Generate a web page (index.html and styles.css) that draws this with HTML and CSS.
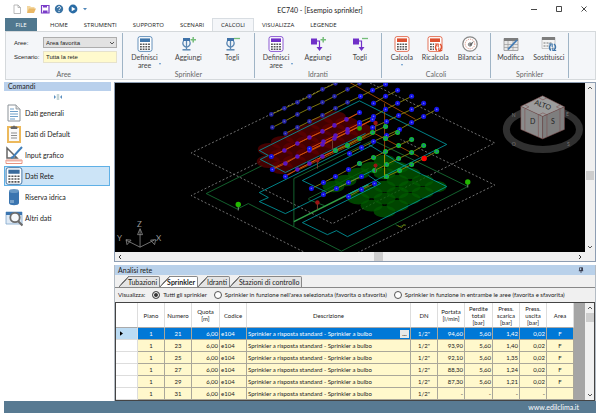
FILE: index.html
```
<!DOCTYPE html>
<html lang="it">

<head>
    <meta charset="utf-8">
    <title>EC740 - [Esempio sprinkler]</title>
    <link rel="stylesheet" href="styles.css">
</head>

<body>

    <!-- shared icons -->
    <svg class="defs" width="0" height="0">
        <symbol id="calc" viewBox="0 0 16 16">
            <rect x="1" y=".6" width="14" height="14.8" rx="2" fill="#fff" stroke="currentColor" stroke-width=".8" />
            <rect x="3" y="2.4" width="10" height="3.6" fill="currentColor" />
            <path d="M3 8.2h10M3 10.7h10M3 13.2h10" stroke="#555" stroke-width="1.4" stroke-dasharray="1.8 .9" />
        </symbol>
        <symbol id="sprink" viewBox="0 0 16 16">
            <path d="M3 2h7v3H3z" fill="#3f72a8" />
            <path d="M3.5 5C2 7.500 3 10 6.500 11.500 10 10 11 7.500 9.500 5M6.500 5v8" fill="none" stroke="#5b87b3" stroke-width="1.300" />
            <path d="M2.500 13.800h8" stroke="#5b87b3" stroke-width="1.500" />
        </symbol>
        <symbol id="hydrant" viewBox="0 0 16 16">
            <path d="M1 2.500h6v6H1z" fill="#7030c8" />
            <path d="M7 5h2.500v7" fill="none" stroke="#7030c8" stroke-width="1.200" />
            <path d="M6.500 11h6l-3 4z" fill="#7030c8" />
        </symbol>
        <symbol id="plus" viewBox="0 0 16 16">
            <path d="M10.500 3.800h5.500M13.200 1v5.500" stroke="#74bd78" stroke-width="1.500" />
        </symbol>
        <symbol id="minus" viewBox="0 0 16 16">
            <path d="M10 2.500h6" stroke="#74bd78" stroke-width="1.300" />
        </symbol>
        <symbol id="cycle" viewBox="0 0 16 16">
            <path d="M10 14.500c-2-1.500-2-4.500 0-6M13 8c2 1.500 2 4.500 0 6" fill="none" stroke="currentColor" stroke-width="1.500" />
            <path d="M7.800 8h3.400v3M15.200 14.500h-3.400v-3" fill="none" stroke="currentColor" stroke-width="1.100" />
        </symbol>
        <symbol id="chev" viewBox="0 0 6 6">
            <path d="M1 2l2 2 2-2" fill="none" stroke="#555" stroke-width="1" />
        </symbol>
    </svg>

    <div class="window">

        <header class="titlebar">
            <div class="quick">
                <button aria-label="Nuovo"><svg viewBox="0 0 10 10"><path d="M2 1h4l2.500 2.500V9.500H2z M6 1v2.500h2.500" fill="#fff" stroke="#aaa" stroke-width=".8" /></svg></button>
                <button aria-label="Apri"><svg viewBox="0 0 10 10"><path d="M1 9V2h3l1 1h3.500v2" fill="#f3d7a0" /><path d="M1 9l2-4.500h7L8 9z" fill="#eab866" /></svg></button>
                <button aria-label="Salva"><svg viewBox="0 0 10 10"><path d="M1.500 1.500h7.500v7.500H1.500z" fill="#fff" stroke="#7a3cc8" stroke-width="1.200" /><path d="M3 1h4v2.500H3zM3 6.500h4.500V9H3z" fill="#7a3cc8" /></svg></button>
                <button aria-label="Aiuto"><svg viewBox="0 0 10 10"><circle cx="5" cy="5" r="4.200" fill="#3b74a5" /><path d="M3.600 4c0-2 2.900-2 2.900-.2C6.500 5 5 5 5 6.200M5 7v1" fill="none" stroke="#fff" stroke-width="1" /></svg></button>
                <button aria-label="Avvia"><svg viewBox="0 0 10 10"><circle cx="5" cy="5" r="4.400" fill="#2a6ca5" /><path d="M3.700 2.800v4.400L7.500 5z" fill="#fff" /></svg></button>
                <button class="more" aria-label="Altro"><svg viewBox="0 0 10 10"><path d="M3 4h4L5 6.200z" fill="#4f86b8" /></svg></button>
            </div>
            <h1>EC740 - [Esempio sprinkler]</h1>
            <div class="controls">
                <button aria-label="Riduci"><svg viewBox="0 0 8 8"><path d="M1 4.500h6" stroke="#333" stroke-width=".9" /></svg></button>
                <button aria-label="Ingrandisci"><svg viewBox="0 0 8 8"><path d="M1.500 1.500h5v5h-5z" fill="none" stroke="#333" stroke-width=".9" /></svg></button>
                <button aria-label="Chiudi"><svg viewBox="0 0 8 8"><path d="M1.500 1.500l5 5M6.500 1.500l-5 5" stroke="#333" stroke-width=".9" /></svg></button>
            </div>
        </header>

        <nav class="menu">
            <button class="file">FILE</button>
            <button>HOME</button>
            <button>STRUMENTI</button>
            <button>SUPPORTO</button>
            <button>SCENARI</button>
            <button class="active">CALCOLI</button>
            <button>VISUALIZZA</button>
            <button>LEGENDE</button>
        </nav>

        <div class="ribbon">
            <section class="group">
                <div class="fields">
                    <label for="aree">Aree:</label>
                    <div class="selectBox">
                        <select id="aree"><option>Area favorita</option></select>
                        <svg viewBox="0 0 6 6"><use href="#chev" /></svg>
                    </div>
                    <label for="scenario">Scenario:</label>
                    <input id="scenario" type="text" value="Tutta la rete">
                </div>
                <h2>Aree</h2>
            </section>
            <section class="group">
                <div class="tools three">
                    <button><svg class="blue" viewBox="0 0 16 16"><use href="#calc" /></svg><span class="drop">Definisci<br>aree</span></button>
                    <button><svg viewBox="0 0 16 16"><use href="#sprink" /><use href="#plus" /></svg><span>Aggiungi</span></button>
                    <button><svg viewBox="0 0 16 16"><use href="#sprink" /><use href="#minus" /></svg><span>Togli</span></button>
                </div>
                <h2>Sprinkler</h2>
            </section>
            <section class="group">
                <div class="tools three">
                    <button><svg class="violet" viewBox="0 0 16 16"><use href="#calc" /></svg><span class="drop">Definisci<br>aree</span></button>
                    <button><svg viewBox="0 0 16 16"><use href="#hydrant" /><use href="#plus" /></svg><span>Aggiungi</span></button>
                    <button><svg viewBox="0 0 16 16"><use href="#hydrant" /><use href="#minus" /></svg><span>Togli</span></button>
                </div>
                <h2>Idranti</h2>
            </section>
            <section class="group">
                <div class="tools calcs">
                    <button><svg class="red" viewBox="0 0 16 16"><use href="#calc" /></svg><span>Calcola</span><i class="caret"></i></button>
                    <button><svg class="red" viewBox="0 0 16 16"><use href="#calc" /><path d="M7 7h7v8H7z" fill="#fff" /><use href="#cycle" /></svg><span>Ricalcola</span></button>
                    <button>
                        <svg viewBox="0 0 16 16">
                            <circle cx="8" cy="8" r="7.200" fill="#fff" stroke="#888" stroke-width="1.300" />
                            <circle cx="8" cy="8" r="4.800" fill="none" stroke="#d98a78" stroke-width="1" stroke-dasharray="1 1" />
                            <path d="M7 8.500l5-3.500-3 5z" fill="#666" /><circle cx="8" cy="8.500" r="1.600" fill="none" stroke="#666" />
                        </svg>
                        <span>Bilancia</span>
                    </button>
                </div>
                <h2>Calcoli</h2>
            </section>
            <section class="group">
                <div class="tools two">
                    <button>
                        <svg viewBox="0 0 16 16">
                            <path d="M1 2.500h14v12H1z" fill="#e8e8e8" stroke="#888" stroke-width=".7" /><path d="M1 2h14v3H1z" fill="#7d7d7d" />
                            <path d="M1 8.500h14M1 11.500h14M5 5v9.500M10 5v9.500" stroke="#999" stroke-width=".7" /><path d="M5 13.500L14 4" stroke="#3f7ab5" stroke-width="1.800" />
                        </svg>
                        <span>Modifica</span>
                    </button>
                    <button>
                        <svg class="blue" viewBox="0 0 16 16">
                            <path d="M1 1.500h13v11H1z" fill="#f4f4f4" stroke="#aaa" stroke-width=".6" /><path d="M1 1h13v3H1z" fill="#7d7d7d" />
                            <path d="M2.500 7h9M2.500 10h5" stroke="#777" stroke-width="1.200" stroke-dasharray="2 1" /><use href="#cycle" />
                        </svg>
                        <span>Sostituisci</span>
                    </button>
                </div>
                <h2>Sprinkler</h2>
            </section>
            <div></div>
        </div>

        <div class="workspace">

            <aside class="commands">
                <h2>Comandi</h2>
                <button class="collapse" aria-label="Comprimi"><svg viewBox="0 0 10 8"><path d="M1 2l2 2-2 2zM9 2L7 4l2 2z" fill="#5b8fc0" /><path d="M4.300 1v6M5.700 1v6" stroke="#8aa" stroke-width=".6" /></svg></button>
                <button class="item">
                    <svg viewBox="0 0 18 18"><path d="M3 1h8l4 4v12H3z" fill="#fff" stroke="#8b9298" /><path d="M11 1v4h4" fill="#ddd" stroke="#8b9298" stroke-width=".8" /><path d="M5 5h4M5 7.500h8M5 10h8M5 12.500h8M5 15h5" stroke="#6f9fca" stroke-width="1.100" /></svg>Dati generali
                </button>
                <button class="item">
                    <svg viewBox="0 0 18 18"><path d="M3 2h12v15H3z" fill="#fafafa" stroke="#ecb95c" stroke-width="2" /><path d="M6 3.500V2h2a1 1 0 0 1 2 0h2v1.500z" fill="#666" stroke="#666" /><path d="M6 8h6M6 10.500h6M6 13h6" stroke="#8b8b8b" stroke-width="1.100" /></svg>Dati di Default
                </button>
                <button class="item">
                    <svg viewBox="0 0 18 18"><path d="M2 2v10h10z" fill="none" stroke="#666" stroke-width="1.500" /><path d="M17 1L8 11l-2 1" fill="none" stroke="#4180bb" stroke-width="2" /><path d="M1 14h16v3.500H1z" fill="#fff" stroke="#e27a62" stroke-width=".8" /><path d="M3 14v2M5 14v2M7 14v2M9 14v2M11 14v2M13 14v2M15 14v2" stroke="#e27a62" stroke-width=".6" /></svg>Input grafico
                </button>
                <button class="item selected">
                    <svg class="navy" viewBox="0 0 16 16"><use href="#calc" /></svg>Dati Rete
                </button>
                <button class="item">
                    <svg viewBox="0 0 18 18"><path d="M4 3v12c0 3 10 3 10 0V3z" fill="#3a75b0" /><ellipse cx="9" cy="3" rx="5" ry="2" fill="#6798c5" /><path d="M6 12v3M8 12v3" stroke="#c5d9ea" stroke-width=".9" /></svg>Riserva idrica
                </button>
                <button class="item">
                    <svg viewBox="0 0 18 18"><path d="M1 3h16v12H1z" fill="#dfeaf5" stroke="#7da6cc" stroke-width=".8" /><path d="M1 3h16v3H1z" fill="#3b75b0" /><circle cx="10" cy="8.500" r="4.700" fill="#f5f8fb" stroke="#6d6d6d" stroke-width="1.800" /><path d="M13 12l4.500 4.500" stroke="#6d6d6d" stroke-width="2.200" /></svg>Altri dati
                </button>
            </aside>

            <main>
                <div class="view">
                    <svg class="scene" viewBox="115 83 469 170" preserveAspectRatio="xMidYMid slice" role="img" aria-label="Vista 3D">
                        <defs>
                            <marker id="b" markerUnits="userSpaceOnUse" markerWidth="6" markerHeight="6" refX="3" refY="3"><circle cx="3" cy="3" r="2.500" fill="#1414e8" /><circle cx="3" cy="3" r=".8" fill="#6c6cf0" /></marker>
                            <marker id="n" markerUnits="userSpaceOnUse" markerWidth="6" markerHeight="6" refX="3" refY="3"><circle cx="3" cy="3" r="2.300" fill="#2222a8" /><circle cx="3" cy="3" r=".8" fill="#6666a8" /></marker>
                            <marker id="v" markerUnits="userSpaceOnUse" markerWidth="6" markerHeight="6" refX="3" refY="3"><circle cx="3" cy="3" r="2.300" fill="#5a14c0" /></marker>
                            <marker id="g" markerUnits="userSpaceOnUse" markerWidth="6" markerHeight="6" refX="3" refY="3"><circle cx="3" cy="3" r="2.500" fill="#12b838" /><circle cx="3" cy="3" r=".9" fill="#2860c0" /></marker>
                            <marker id="er" markerUnits="userSpaceOnUse" markerWidth="26" markerHeight="14" refX="13" refY="7"><ellipse cx="13" cy="7" rx="11.500" ry="6.500" fill="#600000" fill-opacity=".7" /></marker>
                            <marker id="eg" markerUnits="userSpaceOnUse" markerWidth="26" markerHeight="14" refX="13" refY="7"><ellipse cx="13" cy="7" rx="11" ry="5.800" fill="#005c00" fill-opacity=".75" /></marker>
                        </defs>
                        <rect x="-400" y="-400" width="1600" height="1200" fill="#000" />

                        <!-- floor planes -->
                        <g class="plane">
                            <path d="M336 83L191 153.500L332 224L494 143.500L368 83" />
                            <path d="M260 162L191 196L305 253M357 253L494 185.500L400 140" />
                        </g>
                        <g class="wall">
                            <path d="M262 166L206 194L237 209.500L248 204L341 251.500L467 187L373 141" />
                            <path d="M293.500 227V179L372 141M395 225l4 2 6-2M308 200l16 6M308 199L368 169" />
                            <path class="light" d="M293.500 222L368 185" />
                        </g>

                        <!-- coverage areas -->
                        <g class="area" marker-start="url(#er)" marker-mid="url(#er)" marker-end="url(#er)">
                            <polyline points="269,150 282,143 295,137 308,131 321,124 334,118" />
                            <polyline points="268,162 281,156 294,149 307,143 320,137 333,130 346,124" />
                            <polyline points="281,168 294,162 307,155 320,149 333,143 346,136 359,130" />
                        </g>
                        <g class="area" marker-start="url(#eg)" marker-mid="url(#eg)" marker-end="url(#eg)">
                            <polyline points="384,161 371,168 358,174 345,181 333,187" />
                            <polyline points="397,168 384,174" />
                            <polyline points="409,174 397,181 384,187 371,193 358,199" />
                            <polyline points="422,181 409,187 397,193 384,199 371,206" />
                            <polyline points="435,187 422,193 409,199 397,206 384,212" />
                        </g>

                        <g class="edge">
                            <path d="M285 173L268 164L260 160L268 156L259 151L359 101.500L446 145L347 195" />
                            <path d="M285 173L365 134M360 143L259 193L268 198L259 202L285 214L372 171" />
                            <path d="M373 145L302 181L327 193M393 160L368 145" />
                            <path d="M393 161L446 187L347 237L336 231L327 235L302 223L380 184L368 176" />
                        </g>
                        <g class="orange">
                            <path d="M349 83L415 120M372 133L418 157M384 104V158" />
                            <path d="M271 157L360 113M272 169L373 120M285 176L372 132M309 152L375 119M297 171L372 135M310 163L365 137" />
                        </g>
                        <path d="M384 155V179" stroke="#a99600" stroke-width="1" />

                        <!-- pipe runs with their heads -->
                        <g class="pipe" marker-start="url(#n)" marker-mid="url(#n)" marker-end="url(#n)">
                            <polyline points="271,115 284,109 297,103 309,97 322,90 335,84" />
                            <polyline points="272,128 284,122 297,115 309,109 322,103 334,97 347,90 359,84" />
                            <polyline points="285,134 297,128 309,122 322,116 335,109 347,103 360,97" />
                        </g>
                        <g class="pipe" marker-start="url(#b)" marker-mid="url(#b)" marker-end="url(#b)">
                            <polyline points="360,97 372,91 385,85" />
                            <polyline points="373,104 385,97 397,91" />
                            <polyline points="359,123 373,117 385,110 397,104 411,97" />
                            <polyline points="372,128 386,122 398,116 411,110 423,104" />
                            <polyline points="349,154 361,148 373,142 386,136 399,130 411,123 423,117 436,110" />
                            <polyline points="311,189 323,183 335,177 348,170 359,164" />
                            <polyline points="323,195 336,189 348,183 361,177" />
                            <polyline points="348,197 361,190 374,184" />
                        </g>
                        <g class="riser" marker-start="url(#b)" marker-end="url(#b)" marker-mid="url(#v)">
                            <polyline points="271,157 284,151 297,144 309,138 322,132 334,126 346,120 359,113" />
                            <polyline points="272,170 285,164 297,157 309,151 322,145 334,139 347,133 359,127 372,120" />
                            <polyline points="285,177 297,170 309,164 322,157 335,151" />
                            <polyline points="309,149 323,142 335,136 347,130 359,124" />
                        </g>
                        <g class="pipe" marker-start="url(#g)" marker-mid="url(#g)" marker-end="url(#g)">
                            <polyline points="335,151 347,146 359,139 372,133 385,127" />
                            <polyline points="385,139 397,133" />
                            <polyline points="359,164 373,158 385,152 398,146 411,140" />
                            <polyline points="374,171 386,165 398,159 411,153 423,146" />
                            <polyline points="386,177 399,171 411,165 423,159 436,152" />
                        </g>
                        <path d="M375 124v9M317 161v8M317 203v7M375 167v6M332 141v10" stroke="#70402c" stroke-width="1" />
                        <g fill="#9c1414">
                            <circle cx="375" cy="123.500" r="2.200" /><circle cx="317" cy="161" r="2" /><circle cx="317" cy="203" r="2.200" /><circle cx="375" cy="166" r="2" />
                        </g>
                        <circle cx="423.500" cy="159" r="2.700" fill="#f00" />
                        <path d="M238 207v4M467 184v4" stroke="#7a8a7a" stroke-width="1" />
                        <circle cx="238" cy="205" r="2.700" fill="#22b800" /><circle cx="467" cy="182.500" r="2.700" fill="#22b800" /><circle cx="359" cy="129" r="2.400" fill="#22a800" />
                        <path d="M397 226l4 2 2-3 2 1" fill="none" stroke="#8a7c00" stroke-width=".8" />

                        <!-- axes -->
                        <g class="axes">
                            <path d="M140 247.500V230M140 247.500l-14-7M140 247.500l14-7" />
                            <path d="M137.500 235l2.500-6 2.500 6zM126 240l5 .5-4 4.500zM155.500 240l-5 .5 4 4.500z" />
                            <text x="137" y="227">Z</text><text x="117" y="241">Y</text><text x="156" y="241">X</text>
                        </g>

                        <!-- view cube -->
                        <ellipse cx="542" cy="130" rx="36.500" ry="20" fill="none" stroke="#303030" stroke-width="7" />
                        <g class="compass"><text x="511" y="118">N</text><text x="565" y="117">E</text><text x="511" y="147">O</text><text x="566" y="147">S</text></g>
                        <path d="M541.700 96.500L563.500 107.500L541.700 117L520 107z" fill="#9c9c9c" />
                        <path d="M520 107L541.700 117V139.500L520 130z" fill="#8a8a8a" />
                        <path d="M563.500 107.500L541.700 117V139.500L563.500 130z" fill="#7e7e7e" />
                        <path d="M541.700 96.500L563.500 107.500V130L541.700 139.500L520 130V107zM541.700 117V139.500M520 107l21.700 10 21.800-9.500M524 109.500v22M537.500 115.500v22M546 115.500v22M559 110v22M538 98.500l4 2 4-2M524 105.500l4 2-4 2M538 115.500l4-2 4 2M559.500 105.500l-4 2 4 2" fill="none" stroke="#7a4444" stroke-width=".5" />
                        <g class="cube"><text x="533" y="105" transform="rotate(20 533 105)">ALTO</text><text x="529" y="125">D</text><text x="550" y="125">S</text></g>
                    </svg>
                    <div class="scroll vertical"><svg viewBox="0 0 6 6"><path d="M1 4l2-2 2 2" fill="none" stroke="#555" /></svg><span class="thumb"></span><svg viewBox="0 0 6 6"><use href="#chev" /></svg></div>
                    <div class="scroll horizontal"><svg viewBox="0 0 6 6"><path d="M4 1L2 3l2 2" fill="none" stroke="#333" /></svg><span class="thumb"></span><svg viewBox="0 0 6 6"><path d="M2 1l2 2-2 2" fill="none" stroke="#333" /></svg></div>
                </div>

                <section class="analysis">
                    <h2>Analisi rete <svg viewBox="0 0 8 8"><path d="M2 1h4v3.500H2zM1 5h6M4 5v3" fill="none" stroke="#223" stroke-width=".9" /><path d="M4.500 1H6v3.500H4.500z" fill="#223" /></svg></h2>
                    <div class="tabs">
                        <button>Tubazioni</button>
                        <button class="active">Sprinkler</button>
                        <button>Idranti</button>
                        <button>Stazioni di controllo</button>
                    </div>
                    <div class="filters">
                        <span>Visualizza:</span>
                        <label><input type="radio" name="show" checked>Tutti gli sprinkler</label>
                        <label><input type="radio" name="show">Sprinkler in funzione nell'area selezionata (favorita o sfavorita)</label>
                        <label><input type="radio" name="show">Sprinkler in funzione in entrambe le aree (favorita e sfavorita)</label>
                    </div>
                    <div class="gridBox">
                        <table>
                            <colgroup>
                                <col class="mark"><col class="std"><col class="std"><col class="wide"><col class="std"><col><col class="std"><col class="std"><col class="wide"><col class="std"><col class="std"><col class="std">
                            </colgroup>
                            <thead>
                                <tr><th></th><th>Piano</th><th>Numero</th><th>Quota<br>[m]</th><th>Codice</th><th>Descrizione</th><th>DN</th><th>Portata<br>[l/min]</th><th>Perdite<br>totali<br>[bar]</th><th>Press.<br>scarica<br>[bar]</th><th>Press.<br>uscita<br>[bar]</th><th>Area</th></tr>
                            </thead>
                            <tbody>
                                <tr class="current"><td><svg viewBox="0 0 4 6"><path d="M0 0l4 3-4 3z" fill="#000" /></svg></td><td>1</td><td>21</td><td class="num">6,00</td><td class="txt">e104</td><td class="txt"><div class="desc">Sprinkler a risposta standard - Sprinkler a bulbo<button>...</button></div></td><td>1/2"</td><td class="num">94,60</td><td class="num">5,60</td><td class="num">1,42</td><td class="num">0,02</td><td>F</td></tr>
                                <tr><td></td><td>1</td><td>23</td><td class="num">6,00</td><td class="txt">e104</td><td class="txt">Sprinkler a risposta standard - Sprinkler a bulbo</td><td>1/2"</td><td class="num">93,90</td><td class="num">5,60</td><td class="num">1,40</td><td class="num">0,02</td><td>F</td></tr>
                                <tr><td></td><td>1</td><td>25</td><td class="num">6,00</td><td class="txt">e104</td><td class="txt">Sprinkler a risposta standard - Sprinkler a bulbo</td><td>1/2"</td><td class="num">92,10</td><td class="num">5,60</td><td class="num">1,35</td><td class="num">0,02</td><td>F</td></tr>
                                <tr><td></td><td>1</td><td>27</td><td class="num">6,00</td><td class="txt">e104</td><td class="txt">Sprinkler a risposta standard - Sprinkler a bulbo</td><td>1/2"</td><td class="num">88,30</td><td class="num">5,60</td><td class="num">1,24</td><td class="num">0,02</td><td>F</td></tr>
                                <tr><td></td><td>1</td><td>29</td><td class="num">6,00</td><td class="txt">e104</td><td class="txt">Sprinkler a risposta standard - Sprinkler a bulbo</td><td>1/2"</td><td class="num">87,30</td><td class="num">5,60</td><td class="num">1,21</td><td class="num">0,02</td><td>F</td></tr>
                                <tr><td></td><td>1</td><td>31</td><td class="num">6,00</td><td class="txt">e104</td><td class="txt">Sprinkler a risposta standard - Sprinkler a bulbo</td><td>1/2"</td><td class="num">-</td><td class="num">-</td><td class="num">-</td><td class="num">-</td><td></td></tr>
                            </tbody>
                        </table>
                        <div class="scroll vertical top"><svg viewBox="0 0 6 6"><path d="M1 4l2-2 2 2" fill="none" stroke="#555" /></svg><span class="thumb"></span><svg viewBox="0 0 6 6"><use href="#chev" /></svg></div>
                    </div>
                </section>
            </main>
        </div>

        <footer><a href="http://www.edilclima.it">www.edilclima.it</a></footer>
    </div>

</body>

</html>
```
FILE: styles.css
```
* {
    box-sizing: border-box;
}

body {
    margin: 0;
    background-color: #fff;
    color: #222;
    font-family: Lato, "Noto Sans", sans-serif;
    font-size: 7px;
    line-height: 8px;
}

button,
input,
select {
    margin: 0;
    padding: 0;
    border: 0;
    background: none;
    color: inherit;
    font: inherit;
}

h1,
h2 {
    margin: 0;
    font-size: 7px;
    font-weight: normal;
}

svg {
    display: block;
}

.defs {
    position: absolute;
}

.window {
    display: flex;
    flex-direction: column;
    min-height: 100vh;
    padding: 0 4px 5px;
}

/* title bar */
.titlebar {
    display: grid;
    grid-template-columns: 1fr auto 1fr;
    align-items: center;
    height: 18px;
    padding-right: 8px;
}

.titlebar h1 {
    padding: 2px 0 0 48px;
}

.quick {
    display: flex;
    gap: 4px;
    padding-left: 8px;
}

.quick svg {
    width: 10px;
    height: 10px;
}

.quick .more {
    margin-left: -2px;
}

.controls {
    display: flex;
    justify-content: flex-end;
    gap: 17px;
}

.controls svg {
    width: 8px;
    height: 8px;
}

/* menu */
.menu {
    display: flex;
    height: 13px;
    padding-left: 1px;
    font-family: "Open Sans", sans-serif;
    font-size: 6px;
}

.menu button {
    padding: 0 8px;
}

.menu .file {
    width: 32px;
    margin-right: 5px;
    background-color: #50788f;
    color: #fff;
}

.menu .active {
    border: 1px solid #d8dde2;
    border-bottom: 0;
    background-color: #f4f6f9;
}

/* ribbon */
.ribbon {
    display: grid;
    grid-template-columns: 117fr 133fr 127fr 110fr 78fr 26fr;
    height: 49px;
    margin-left: 1px;
    border: 1px solid #d5d9dc;
    background-color: #f4f6f9;
}

.group {
    display: flex;
    flex-direction: column;
    justify-content: space-between;
    min-width: 0;
    margin: 1px 0;
    border-right: 1px solid #9fb4c6;
}

.group h2 {
    color: #666;
    text-align: center;
}

.fields {
    display: grid;
    grid-template-columns: 24px 1fr;
    gap: 3px 5px;
    align-items: center;
    padding: 4px 5px 0 8px;
    font-family: "Liberation Sans", sans-serif;
    font-size: 6px;
}

.selectBox {
    display: grid;
    align-items: center;
    justify-items: end;
}

.selectBox select,
.selectBox svg {
    grid-area: 1 / 1;
}

.selectBox svg {
    width: 6px;
    height: 6px;
    margin-right: 2px;
    pointer-events: none;
}

.fields select {
    width: 100%;
    height: 11px;
    padding-left: 2px;
    border: 1px solid #adadad;
    background-color: #e2e2e2;
    appearance: none;
}

.fields input {
    width: 100%;
    height: 12px;
    padding-left: 2px;
    border: 1px solid #e6e2cc;
    background-color: #fffacd;
}

.tools {
    display: grid;
    padding-top: 3px;
}

.three {
    grid-template-columns: repeat(3, 1fr);
}

.calcs {
    grid-template-columns: repeat(3, auto);
    justify-content: space-evenly;
}

.two {
    grid-template-columns: repeat(2, 1fr);
}

.tools button {
    display: flex;
    flex-direction: column;
    align-items: center;
    gap: 1px;
    color: #444;
}

.tools svg {
    width: 16px;
    height: 16px;
}

.blue {
    color: #3f76ab;
}

.violet {
    color: #7030c8;
}

.red {
    color: #dd5030;
}

.navy {
    color: #3a6b9c;
}

.drop::after,
.caret {
    display: inline-block;
    border: 1px solid transparent;
    border-top: 2px solid #5b93c8;
    border-bottom: 0;
}

.drop::after {
    content: "";
    margin: 0 -10px 3px 8px;
}

.caret {
    margin-top: 2px;
}

/* left commands */
.workspace {
    display: flex;
    flex: 1;
    gap: 3px;
    padding-top: 2px;
}

.commands {
    display: flex;
    flex-direction: column;
    width: 107px;
}

.commands h2 {
    height: 9px;
    padding-left: 4px;
    background-color: #b9d0ec;
}

.collapse {
    align-self: center;
    padding: 2px 0;
}

.collapse svg {
    width: 10px;
    height: 8px;
}

.item {
    display: flex;
    align-items: center;
    gap: 2px;
    height: 20px;
    margin: 0 1px 1px 0;
    border: 1px solid transparent;
    text-align: left;
}

.item svg {
    width: 18px;
    height: 18px;
}

.item.selected {
    border-color: #5fb0e6;
    background-color: #cce4f7;
}

/* drawing */
main {
    display: flex;
    flex: 1;
    flex-direction: column;
    gap: 3px;
    min-width: 0;
}

.view {
    display: grid;
    flex: 1;
    grid-template-columns: 1fr 10px;
    grid-template-rows: minmax(0, 1fr) 9px;
    min-height: 120px;
    border: 1px solid #8d9db2;
    background-color: #f0f0f0;
}

.scene {
    width: 100%;
    height: 0;
    min-height: 100%;
}

.plane path {
    fill: none;
    stroke: #8c8c8c;
    stroke-width: .8;
    stroke-dasharray: 2 2;
}

.wall path {
    fill: none;
    stroke: #187838;
    stroke-width: .8;
}

.wall .light {
    stroke: #30a048;
    stroke-width: 1.5;
}

.area,
.edge,
.orange,
.pipe,
.riser {
    fill: none;
}

.edge {
    stroke: #00a0a8;
    stroke-width: .8;
}

.orange {
    stroke: #b85200;
    stroke-width: .8;
}

.pipe {
    stroke: #8c8410;
    stroke-width: .9;
}

.riser {
    stroke: #e05010;
    stroke-width: .9;
}

.axes {
    fill: none;
    stroke: #8c8c8c;
    stroke-width: .8;
}

.axes text {
    fill: #999;
    stroke: none;
    font-size: 8px;
}

.compass text {
    fill: #777;
    font-size: 5px;
}

.cube text {
    fill: #222;
    font-size: 7px;
}

.scroll {
    display: flex;
    align-items: center;
    justify-content: space-between;
    background-color: #f0f0f0;
}

.scroll svg {
    width: 6px;
    height: 6px;
}

.vertical {
    flex-direction: column;
    padding: 2px 0;
}

.vertical .thumb {
    width: 8px;
    height: 9px;
    margin-top: 16px;
    background-color: #cdcdcd;
}

.horizontal {
    padding: 0 2px;
}

.horizontal .thumb {
    width: 9px;
    height: 9px;
    margin-left: 56px;
    background-color: #cdcdcd;
}

.top .thumb {
    margin: 2px 0 auto;
}

/* analysis */
.analysis {
    border: 1px solid #b4bcc4;
    border-top: 0;
    border-bottom: 0;
    background-color: #f0f0f0;
}

.analysis h2 {
    display: flex;
    align-items: center;
    justify-content: space-between;
    height: 10px;
    padding: 0 11px 0 3px;
    background-color: #b9d1ea;
}

.analysis h2 svg {
    width: 6px;
    height: 6px;
}

.tabs {
    display: flex;
    height: 13px;
    padding: 1px 0 0 4px;
    border-bottom: 1px solid #888;
}

.tabs button {
    padding: 0 2px 0 9px;
    border-right: 1px solid #888;
    border-top-right-radius: 2px;
    background:
        linear-gradient(to bottom right, #f0f0f0 45%, #777 47%, #777 53%, #e4e4e4 55%) left / 10px 100% no-repeat,
        linear-gradient(#888, #888) right top / calc(100% - 10px) 1px no-repeat,
        #e4e4e4;
}

.tabs .active {
    padding-left: 7px;
    font-weight: bold;
    background:
        linear-gradient(to bottom right, #f0f0f0 45%, #777 47%, #777 53%, #fff 55%) left / 10px 100% no-repeat,
        linear-gradient(#888, #888) right top / calc(100% - 10px) 1px no-repeat,
        #fff;
}

.filters {
    display: flex;
    align-items: center;
    gap: 7px;
    height: 14px;
    padding-left: 3px;
    font-size: 6px;
    white-space: nowrap;
}

.filters label {
    display: flex;
    align-items: center;
    gap: 3px;
}

.filters input {
    width: 8px;
    height: 8px;
    border: 1px solid #555;
    border-radius: 50%;
    background-color: #fff;
    appearance: none;
}

.filters input:checked {
    background-color: #333;
    box-shadow: inset 0 0 0 1px #fff;
}

.gridBox {
    display: grid;
    grid-template-columns: 1fr 9px;
    column-gap: 11px;
    border: 1px solid #444;
    background-color: #a5a5a5;
}

table {
    width: 100%;
    border-collapse: separate;
    border-spacing: 0;
    table-layout: fixed;
    font-size: 6px;
    line-height: 7px;
}

.mark {
    width: 22px;
}

.std {
    width: 27px;
}

.wide {
    width: 28px;
}

th {
    height: 25px;
    padding: 0;
    border-right: 1px solid #ddd;
    border-bottom: 1px solid #aaa;
    background-color: #fff;
    font-weight: normal;
}

td {
    height: 12px;
    padding: 0 1px;
    border-right: 1px solid #aaa79a;
    border-bottom: 1px solid #aaa79a;
    background-color: #fff8cc;
    text-align: center;
    white-space: nowrap;
}

td:first-child {
    padding-left: 4px;
    border-color: #ddd;
    background-color: #fff;
}

td svg {
    width: 3px;
    height: 5px;
}

.num {
    text-align: right;
}

.txt {
    text-align: left;
}

.current td {
    background-color: #0078d7;
    color: #fff;
}

.current td:first-child {
    background-color: #bcdcf4;
}

.desc {
    display: flex;
    align-items: center;
    justify-content: space-between;
}

.desc button {
    width: 9px;
    height: 8px;
    background-color: #e8e8e8;
    color: #000;
    font-weight: bold;
    line-height: 4px;
}

footer {
    height: 12px;
    padding: 2px 17px 0 0;
    background-color: #587a92;
    text-align: right;
}

footer a {
    color: #fff;
    text-decoration: none;
}
```
